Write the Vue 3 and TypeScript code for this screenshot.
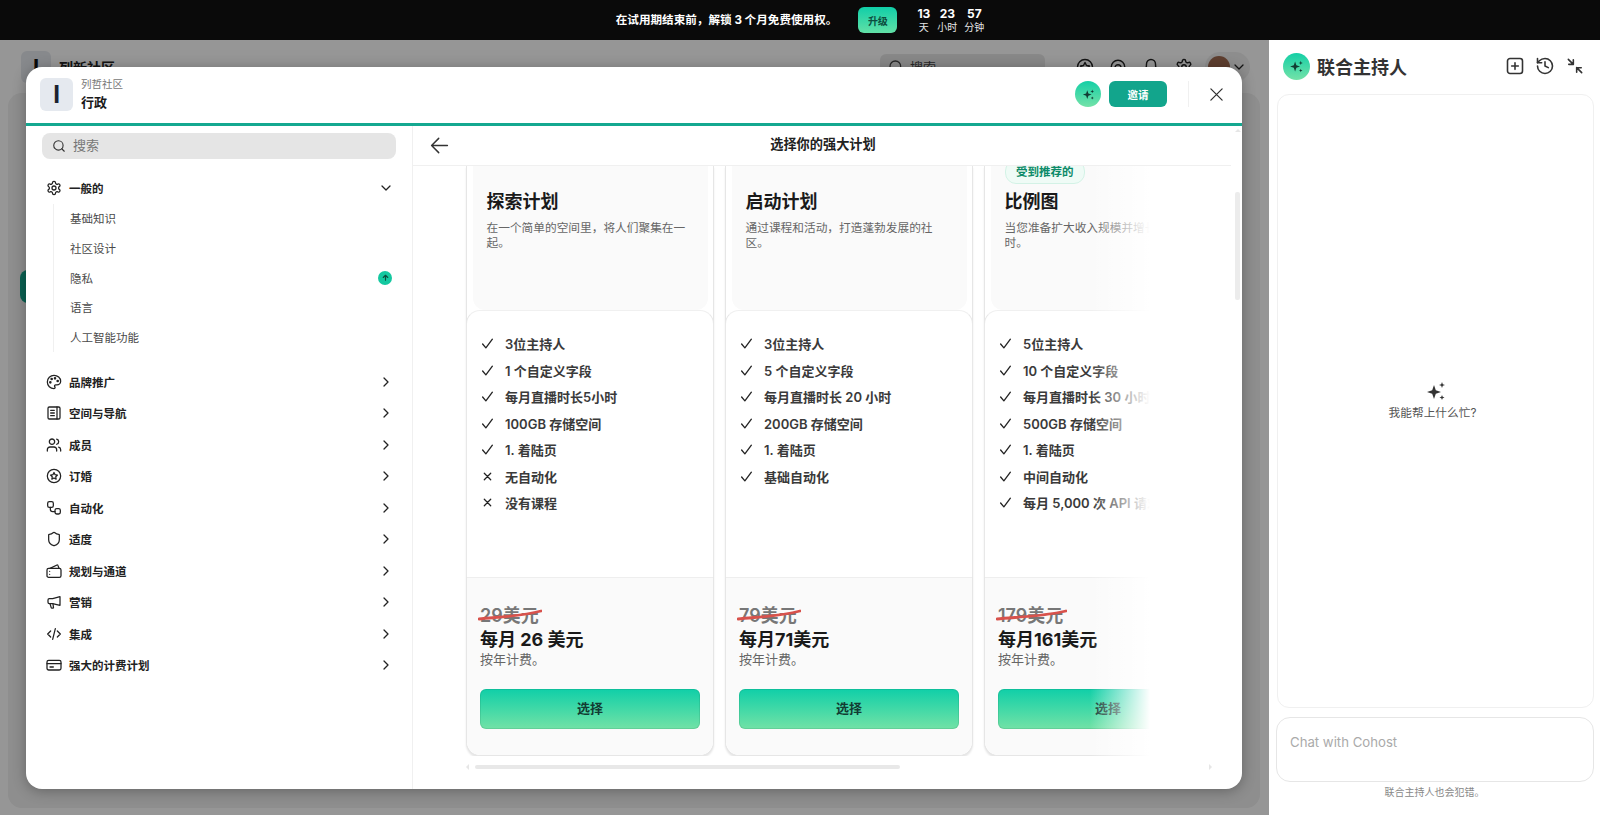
<script setup lang="ts">
interface Feature { text: string; ok: boolean }
interface Plan {
  name: string; desc: string; old: string; price: string; strike: number;
  badge?: string; features: Feature[]
}
const yes = (text: string): Feature => ({ text, ok: true })
const no = (text: string): Feature => ({ text, ok: false })

const plans: Plan[] = [
  {
    name: '探索计划', desc: '在一个简单的空间里，将人们聚集在一起。', old: '29美元', price: '每月 26 美元', strike: 64,
    features: [yes('3位主持人'), yes('1 个自定义字段'), yes('每月直播时长5小时'), yes('100GB 存储空间'), yes('1. 着陆页'), no('无自动化'), no('没有课程')]
  },
  {
    name: '启动计划', desc: '通过课程和活动，打造蓬勃发展的社区。', old: '79美元', price: '每月71美元', strike: 64,
    features: [yes('3位主持人'), yes('5 个自定义字段'), yes('每月直播时长 20 小时'), yes('200GB 存储空间'), yes('1. 着陆页'), yes('基础自动化')]
  },
  {
    name: '比例图', desc: '当您准备扩大收入规模并增长用户群时。', old: '179美元', price: '每月161美元', strike: 71, badge: '受到推荐的',
    features: [yes('5位主持人'), yes('10 个自定义字段'), yes('每月直播时长 30 小时'), yes('500GB 存储空间'), yes('1. 着陆页'), yes('中间自动化'), yes('每月 5,000 次 API 请求')]
  }
]

const subItems = ['基础知识', '社区设计', '隐私', '语言', '人工智能功能']

const gear = 'M12.22 2h-.44a2 2 0 0 0-2 2v.18a2 2 0 0 1-1 1.73l-.43.25a2 2 0 0 1-2 0l-.15-.08a2 2 0 0 0-2.73.73l-.22.38a2 2 0 0 0 .73 2.73l.15.1a2 2 0 0 1 1 1.72v.51a2 2 0 0 1-1 1.74l-.15.09a2 2 0 0 0-.73 2.73l.22.38a2 2 0 0 0 2.73.73l.15-.08a2 2 0 0 1 2 0l.43.25a2 2 0 0 1 1 1.73V20a2 2 0 0 0 2 2h.44a2 2 0 0 0 2-2v-.18a2 2 0 0 1 1-1.73l.43-.25a2 2 0 0 1 2 0l.15.08a2 2 0 0 0 2.73-.73l.22-.39a2 2 0 0 0-.73-2.73l-.15-.08a2 2 0 0 1-1-1.74v-.5a2 2 0 0 1 1-1.74l.15-.09a2 2 0 0 0 .73-2.73l-.22-.38a2 2 0 0 0-2.73-.73l-.15.08a2 2 0 0 1-2 0l-.43-.25a2 2 0 0 1-1-1.73V4a2 2 0 0 0-2-2z'

const navItems = [
  { label: '品牌推广', icon: '<circle cx="13.5" cy="6.5" r="1" fill="currentColor"/><circle cx="17.5" cy="10.5" r="1" fill="currentColor"/><circle cx="8.5" cy="7.5" r="1" fill="currentColor"/><circle cx="6.5" cy="12.5" r="1" fill="currentColor"/><path d="M12 2C6.5 2 2 6.5 2 12s4.5 10 10 10c.926 0 1.648-.746 1.648-1.688 0-.437-.18-.835-.437-1.125-.29-.289-.438-.652-.438-1.125a1.64 1.64 0 0 1 1.668-1.668h1.996c3.051 0 5.555-2.503 5.555-5.554C21.965 6.012 17.461 2 12 2z"/>' },
  { label: '空间与导航', icon: '<rect x="3" y="3" width="18" height="18" rx="2"/><path d="M16.5 3v18M7 8h5.5M7 12h5.5M7 16h5.5"/>' },
  { label: '成员', icon: '<path d="M16 21v-2a4 4 0 0 0-4-4H6a4 4 0 0 0-4 4v2"/><circle cx="9" cy="7" r="4"/><path d="M22 21v-2a4 4 0 0 0-3-3.87"/><path d="M16 3.13a4 4 0 0 1 0 7.75"/>' },
  { label: '订婚', icon: '<circle cx="12" cy="12" r="10"/><path d="M12 6.8l1.6 3.3 3.6.5-2.6 2.5.6 3.6-3.2-1.7-3.2 1.7.6-3.6-2.6-2.5 3.6-.5z"/>' },
  { label: '自动化', icon: '<rect x="2.5" y="2.5" width="8.5" height="8.5" rx="2.5"/><rect x="13.5" y="13" width="8" height="8" rx="2.5"/><path d="M6.5 11v3a3.5 3.5 0 0 0 3.5 3.5h3.5"/>' },
  { label: '适度', icon: '<path d="M20 13c0 5-3.5 7.5-7.66 8.95a1 1 0 0 1-.67-.01C7.5 20.5 4 18 4 13V6a1 1 0 0 1 1-1c2 0 4.5-1.2 6.24-2.72a1.17 1.17 0 0 1 1.52 0C14.51 3.81 17 5 19 5a1 1 0 0 1 1 1z"/>' },
  { label: '规划与通道', icon: '<rect x="1.5" y="8" width="21" height="13.5" rx="2.5"/><path d="M6 8l10.5-5a1 1 0 0 1 1.4.6L19.5 8"/><path d="M5.5 12.5h.01M5.5 17h.01"/>' },
  { label: '营销', icon: '<path d="M21 4v13L10 14.5H5a2 2 0 0 1-2-2V9a2 2 0 0 1 2-2h5z"/><path d="M6 14.5l1.8 6a1 1 0 0 0 1 .7h1.4a1 1 0 0 0 1-1.3L10.5 15"/>' },
  { label: '集成', icon: '<path d="M7 7.5L2.5 12 7 16.5M17 7.5l4.5 4.5-4.5 4.5M14 4l-4 16"/>' },
  { label: '强大的计费计划', icon: '<rect x="1.5" y="5" width="21" height="14.5" rx="2.5"/><path d="M1.5 10h21M6 15h5"/>' }
]
</script>

<template>
  <div class="page">
    <header class="promo">
      <span class="promo-text">在试用期结束前，解锁 3 个月免费使用权。</span>
      <button class="promo-btn" type="button">升级</button>
      <div class="timer">
        <div class="timer-col"><b>13</b><span>天</span></div>
        <div class="timer-col"><b>23</b><span>小时</span></div>
        <div class="timer-col"><b>57</b><span>分钟</span></div>
      </div>
    </header>

    <div class="workspace">
      <div class="under">
        <div class="under-head">
          <div class="under-brand">
            <span class="under-logo">I</span>
            <span class="under-name">列新社区</span>
          </div>
          <div class="under-tools">
            <div class="under-search">
              <svg class="ico-16" viewBox="0 0 24 24"><circle cx="11" cy="11" r="8"/><path d="M21 21l-4.3-4.3"/></svg>
              <span>搜索</span>
            </div>
            <div class="under-icons">
              <svg class="ico-18" viewBox="0 0 24 24"><circle cx="12" cy="12" r="10"/><path d="M12 6l2 4 4 .6-3 3 .8 4-3.8-2-3.8 2 .8-4-3-3 4-.6z"/></svg>
              <svg class="ico-18" viewBox="0 0 24 24"><path d="M3 12a9 9 0 1 1 9 9"/><path d="M8 13a4 4 0 1 1 4 4"/></svg>
              <svg class="ico-18" viewBox="0 0 24 24"><path d="M6 8a6 6 0 0 1 12 0c0 7 3 9 3 9H3s3-2 3-9"/></svg>
              <svg class="ico-18" viewBox="0 0 24 24"><path :d="gear"/><circle cx="12" cy="12" r="3"/></svg>
            </div>
            <div class="under-user">
              <span class="under-avatar"></span>
              <svg class="ico-16" viewBox="0 0 24 24"><path d="M6 9l6 6 6-6"/></svg>
            </div>
          </div>
        </div>
        <div class="under-panel">
          <span class="under-pill"></span>
        </div>
        <div class="scrim"></div>
      </div>

      <aside class="cohost">
        <div class="cohost-head">
          <span class="ai-dot ai-dot-lg">
            <svg viewBox="0 0 24 24"><path d="M10 5l1.8 5.2L17 12l-5.2 1.8L10 19l-1.8-5.2L3 12l5.2-1.8zM18 4l.8 2.2L21 7l-2.2.8L18 10l-.8-2.2L15 7l2.2-.8zM18 15l.7 1.8 1.8.7-1.8.7L18 20l-.7-1.8-1.8-.7 1.8-.7z"/></svg>
          </span>
          <h2 class="cohost-title">联合主持人</h2>
          <div class="cohost-actions">
            <svg class="ico-20" viewBox="0 0 24 24"><rect x="3" y="3" width="18" height="18" rx="3"/><path d="M12 8v8M8 12h8"/></svg>
            <svg class="ico-20" viewBox="0 0 24 24"><path d="M3 12a9 9 0 1 0 9-9 9.75 9.75 0 0 0-6.74 2.74L3 8"/><path d="M3 3v5h5"/><path d="M12 7v5l4 2"/></svg>
            <svg class="ico-20" viewBox="0 0 24 24"><path d="M4 4l6 6M10 4.5V10H4.5M20 20l-6-6M14 19.5V14h5.5"/></svg>
          </div>
        </div>
        <div class="chat">
          <svg class="chat-spark" viewBox="0 0 24 24"><path d="M10 5l1.8 5.2L17 12l-5.2 1.8L10 19l-1.8-5.2L3 12l5.2-1.8zM18 2l.8 2.2L21 5l-2.2.8L18 8l-.8-2.2L15 5l2.2-.8zM18 15l.7 1.8 1.8.7-1.8.7L18 20l-.7-1.8-1.8-.7 1.8-.7z"/></svg>
          <p class="chat-hint">我能帮上什么忙?</p>
        </div>
        <div class="chat-input">Chat with Cohost</div>
        <p class="chat-note">联合主持人也会犯错。</p>
      </aside>
    </div>

    <section class="modal">
      <header class="modal-head">
        <span class="modal-logo">I</span>
        <div class="modal-titles">
          <span class="modal-sup">列哲社区</span>
          <strong class="modal-name">行政</strong>
        </div>
        <div class="modal-actions">
          <span class="ai-dot">
            <svg viewBox="0 0 24 24"><path d="M10 5l1.8 5.2L17 12l-5.2 1.8L10 19l-1.8-5.2L3 12l5.2-1.8zM18 4l.8 2.2L21 7l-2.2.8L18 10l-.8-2.2L15 7l2.2-.8zM18 15l.7 1.8 1.8.7-1.8.7L18 20l-.7-1.8-1.8-.7 1.8-.7z"/></svg>
          </span>
          <button class="invite" type="button">邀请</button>
          <span class="divider"></span>
          <svg class="close" viewBox="0 0 24 24"><path d="M3 3l18 18M21 3L3 21"/></svg>
        </div>
      </header>

      <div class="modal-body">
        <nav class="side">
          <div class="side-search">
            <svg class="ico-16" viewBox="0 0 24 24"><circle cx="11" cy="11" r="8"/><path d="M21 21l-4.3-4.3"/></svg>
            <span>搜索</span>
          </div>
          <div class="nav-row nav-first">
            <svg class="ico-16" viewBox="0 0 24 24"><path :d="gear"/><circle cx="12" cy="12" r="3"/></svg>
            <span class="nav-label">一般的</span>
            <svg class="ico-16 chev" viewBox="0 0 24 24"><path d="M6 9l6 6 6-6"/></svg>
          </div>
          <ul class="sub">
            <li v-for="s in subItems" :key="s" class="sub-item">
              <span>{{ s }}</span>
              <span v-if="s === '隐私'" class="up-badge">
                <svg viewBox="0 0 24 24"><path d="M12 19V6M6 12l6-6 6 6"/></svg>
              </span>
            </li>
          </ul>
          <div class="nav-list">
            <div v-for="item in navItems" :key="item.label" class="nav-row">
              <svg class="ico-16" viewBox="0 0 24 24" v-html="item.icon"></svg>
              <span class="nav-label">{{ item.label }}</span>
              <svg class="ico-16 chev" viewBox="0 0 24 24"><path d="M9 6l6 6-6 6"/></svg>
            </div>
          </div>
        </nav>

        <div class="main">
          <div class="main-head">
            <svg class="back" viewBox="0 0 24 24"><path d="M22 12H2M11 3l-9 9 9 9"/></svg>
            <h1 class="main-title">选择你的强大计划</h1>
          </div>
          <div class="plans">
            <article v-for="p in plans" :key="p.name" class="card">
              <span v-if="p.badge" class="rec">{{ p.badge }}</span>
              <div class="card-top">
                <h3 class="card-name">{{ p.name }}</h3>
                <p class="card-desc">{{ p.desc }}</p>
              </div>
              <ul class="features">
                <li v-for="f in p.features" :key="f.text" class="feature">
                  <svg v-if="f.ok" class="mark" viewBox="0 0 24 24"><path d="M3 13l6 7L21 4"/></svg>
                  <svg v-else class="mark mark-x" viewBox="0 0 24 24"><path d="M5 5l14 14M19 5L5 19"/></svg>
                  <span>{{ f.text }}</span>
                </li>
              </ul>
              <div class="card-foot">
                <div class="old">
                  <span>{{ p.old }}</span>
                  <svg class="strike" :style="{ width: p.strike + 'px' }" viewBox="0 0 64 12" preserveAspectRatio="none"><path d="M1 10C16 8 40 8 63 2"/></svg>
                </div>
                <div class="price">{{ p.price }}</div>
                <div class="bill">按年计费。</div>
                <button class="pick" type="button">选择</button>
              </div>
            </article>
            <div class="fade"></div>
          </div>
          <div class="hbar">
            <i class="tri tri-l"></i>
            <span class="hthumb"></span>
            <i class="tri tri-r"></i>
          </div>
          <span class="vthumb"></span>
          <i class="tri tri-u"></i>
        </div>
      </div>
    </section>
  </div>
</template>

<style>
html, body { margin: 0; height: 815px; overflow: hidden; background: #fff; }
</style>

<style scoped>
.page {
  position: relative;
  width: 1600px;
  height: 815px;
  overflow: hidden;
  display: flex;
  flex-direction: column;
  font-family: Inter, "Noto Sans CJK SC", sans-serif;
  color: #222;
}
h1, h2, h3, p, ul { margin: 0; padding: 0; list-style: none; }
button { font-family: inherit; border: 0; cursor: pointer; }
svg { flex: none; fill: none; stroke: currentColor; stroke-width: 1.9; stroke-linecap: round; stroke-linejoin: round; }
.ico-16 { width: 16px; height: 16px; }
.ico-18 { width: 18px; height: 18px; }
.ico-20 { width: 20px; height: 20px; }

/* promo bar */
.promo {
  height: 40px;
  flex: none;
  background: #0a0a0a;
  display: flex;
  align-items: center;
  justify-content: center;
  color: #fff;
}
.promo-text { font-size: 11.6px; font-weight: 700; line-height: 16px; }
.promo-btn {
  margin-left: 21px;
  width: 39px;
  height: 26px;
  border-radius: 6px;
  background: linear-gradient(180deg, #10cea8, #62e0a6);
  color: #0c4d3e;
  font-size: 10px;
  font-weight: 700;
  padding: 0;
}
.timer { margin-left: 20px; display: flex; gap: 7px; }
.timer-col { display: flex; flex-direction: column; align-items: center; }
.timer-col b { font-size: 12px; line-height: 14px; font-weight: 700; }
.timer-col span { font-size: 10px; line-height: 13px; color: #e6e6e6; }

/* page behind the dialog */
.workspace { flex: 1; display: flex; min-height: 0; }
.under {
  position: relative;
  width: 1269px;
  flex: none;
  display: flex;
  flex-direction: column;
  background: #fff;
}
.under-head {
  height: 53px;
  flex: none;
  display: flex;
  align-items: center;
  justify-content: space-between;
  padding: 0 19px 0 21px;
}
.under-brand { display: flex; align-items: center; gap: 8px; }
.under-logo {
  width: 30px; height: 32px; border-radius: 6px; background: #e5e9ef;
  display: flex; align-items: center; justify-content: center;
  font-size: 22px; font-weight: 700; color: #111;
}
.under-name { font-size: 14px; font-weight: 700; }
.under-tools { display: flex; align-items: center; }
.under-search {
  width: 165px; height: 26px; box-sizing: border-box; border-radius: 6px; background: #e8e8e8;
  display: flex; align-items: center; gap: 6px; padding-left: 8px; font-size: 13px; color: #444;
}
.under-icons { margin-left: 31px; display: flex; gap: 15px; }
.under-user {
  margin-left: 12px; width: 45px; height: 30px; border-radius: 15px; background: #f0f0f0;
  display: flex; align-items: center; justify-content: center; gap: 1px;
}
.under-avatar { width: 22px; height: 22px; border-radius: 50%; background: #a06a50; }
.under-panel {
  flex: 1;
  margin: 0 9px 7px 8px;
  border-radius: 14px;
  background: #f1f1f1;
  padding: 177px 0 0 12px;
}
.under-pill { display: block; width: 40px; height: 33px; border-radius: 8px; background: #12a58c; }
.scrim { position: absolute; inset: 0; background: rgba(0, 0, 0, 0.41); }

/* cohost panel */
.cohost { flex: 1; display: flex; flex-direction: column; background: #fff; min-width: 0; }
.cohost-head {
  height: 54px; flex: none; display: flex; align-items: center;
  padding: 0 15px 2px 14px; box-sizing: border-box;
}
.ai-dot {
  width: 26px; height: 26px; border-radius: 50%; flex: none;
  background: linear-gradient(180deg, #14cfa6, #74e2a8);
  display: flex; align-items: center; justify-content: center; color: #123c33;
}
.ai-dot svg { width: 15px; height: 15px; fill: currentColor; stroke: none; }
.ai-dot-lg { width: 27px; height: 27px; }
.ai-dot-lg svg { width: 17px; height: 17px; }
.cohost-title { margin-left: 7px; font-size: 18px; font-weight: 600; color: #333; }
.cohost-actions { margin-left: auto; display: flex; gap: 10px; color: #333; }
.chat {
  flex: 1; margin: 0 6px 0 8px; border: 1px solid #f0f0f0; border-radius: 12px;
  display: flex; flex-direction: column; align-items: center; justify-content: center;
}
.chat-spark { width: 24px; height: 24px; margin: -1px 0 -1px; fill: #333; stroke: none; }
.chat-hint { margin: 2px 6px 0 0; font-size: 11.7px; line-height: 17px; color: #555; }
.chat-input {
  flex: none; height: 65px; box-sizing: border-box; margin: 9px 6px 0 7px;
  border: 1px solid #e6e6e6; border-radius: 14px; padding: 14px 13px 0;
  font-size: 13.2px; line-height: 20px; color: #aaa;
}
.chat-note {
  flex: none; height: 33px; box-sizing: border-box; padding-top: 3px;
  text-align: center; font-size: 10px; line-height: 14px; color: #888;
}

/* dialog */
.modal {
  position: absolute;
  left: 26px;
  top: 67px;
  width: 1216px;
  height: 722px;
  background: #fff;
  border-radius: 16px;
  overflow: hidden;
  display: flex;
  flex-direction: column;
  box-shadow: 0 2px 14px rgba(0, 0, 0, 0.3);
}
.modal-head {
  flex: none; height: 56px; box-sizing: content-box; display: flex; align-items: center;
  padding: 0 18px 0 14px; border-bottom: 3px solid #14a890;
}
.modal-logo {
  width: 33px; height: 33px; margin-top: -2px; border-radius: 6px; background: #e5e9ef;
  display: flex; align-items: center; justify-content: center;
  font-size: 24px; font-weight: 700; color: #1a2230;
}
.modal-titles { margin: -2px 0 0 8px; display: flex; flex-direction: column; }
.modal-sup { font-size: 10.5px; line-height: 15px; color: #777; }
.modal-name { font-size: 13px; line-height: 19px; font-weight: 700; color: #1a1a1a; margin-top: 1px; }
.modal-actions { margin: -2px 0 0 auto; display: flex; align-items: center; }
.invite {
  margin-left: 8px; width: 58px; height: 26px; border-radius: 6px; background: #12a58c;
  color: #fff; font-size: 10.5px; font-weight: 700; padding: 0;
}
.divider { width: 1px; height: 26px; background: #f0f0f0; margin: 0 20px 0 21px; }
.close { width: 15px; height: 15px; stroke-width: 2; color: #333; }
.modal-body { flex: 1; display: flex; min-height: 0; }

/* settings side nav */
.side {
  width: 387px; flex: none; box-sizing: border-box; border-right: 1px solid #f0f0f0;
  padding: 7px 16px 0;
}
.side-search {
  height: 26px; border-radius: 8px; background: #e5e5e5; color: #333;
  display: flex; align-items: center; gap: 7px; padding-left: 10px;
}
.side-search .ico-16 { width: 14px; height: 14px; }
.side-search span { font-size: 13px; line-height: 18px; color: #777; margin-top: -2px; }
.nav-row {
  height: 31.5px; display: flex; align-items: center; padding: 0 2px 0 4px;
  color: #222;
}
.nav-row .ico-16 { stroke-width: 1.9; }
.nav-label { margin-left: 7px; font-size: 11.5px; font-weight: 600; color: #222; }
.chev { margin-left: auto; stroke-width: 2.3; }
.nav-first { margin-top: 13px; }
.sub { margin-left: 11px; border-left: 1px solid #f0f0f0; padding-left: 16px; }
.sub-item {
  height: 29.7px; display: flex; align-items: center; justify-content: space-between;
  font-size: 11.5px; color: #4a4a4a; padding-right: 4px;
}
.up-badge {
  width: 14px; height: 14px; border-radius: 50%; background: #14c8a0; color: #0c4d3e;
  display: flex; align-items: center; justify-content: center;
}
.up-badge svg { width: 9px; height: 9px; stroke-width: 3; }
.nav-list { margin-top: 14px; }

/* plans */
.main { position: relative; flex: 1; min-width: 0; display: flex; flex-direction: column; }
.main-head {
  position: relative; flex: none; height: 39px; margin-right: 11px; border-bottom: 1px solid #f0f0f0;
  display: flex; align-items: center; justify-content: center;
}
.back { position: absolute; left: 17px; top: 10px; width: 19px; height: 19px; stroke-width: 1.8; color: #333; }
.main-title { font-size: 13.2px; line-height: 18px; margin: -3px 0 0 2px; font-weight: 600; color: #222; }
.plans {
  position: relative; flex: none; height: 590px; overflow: hidden;
  display: flex; gap: 11px; padding-left: 53px;
}
.card {
  position: relative; flex: none; width: 248px; height: 590px; box-sizing: border-box;
  border: 1.5px solid #e6e6e6; border-top: 0; border-radius: 0 0 14px 14px; background: #fff;
  box-shadow: 0 2px 2px rgba(0, 0, 0, 0.1);
  display: flex; flex-direction: column; overflow: visible;
}
.rec {
  position: absolute; left: 20px; top: -6px; height: 22px; padding: 0 10px;
  border: 1px solid #d3f2e6; border-radius: 11px; background: #effbf6;
  color: #0b8a68; font-size: 11.5px; font-weight: 700; line-height: 22px; z-index: 1;
}
.card-top {
  flex: none; height: 144px; margin: 0 5.5px; box-sizing: border-box; padding: 23px 8px 0 14px;
  background: #fafafa; border-radius: 0 0 12px 12px;
}
.card-name { font-size: 18px; line-height: 26px; font-weight: 700; color: #1a1a1a; }
.card-desc { margin-top: 6px; width: 204px; font-size: 11.7px; line-height: 14.5px; color: #666; }
.features {
  flex: none; height: 267px; box-sizing: border-box; padding: 19.5px 0 0 14px;
  border-top: 1px solid #f0f0f0; border-radius: 14px 14px 0 0;
  margin: 0 -1px; border-left: 1px solid #e8e8e8; border-right: 1px solid #e8e8e8;
}
.feature { height: 26px; margin-bottom: .5px; display: flex; align-items: center; font-size: 13px; font-weight: 600; color: #3a3a3a; }
.mark { width: 13px; height: 13px; stroke-width: 2.4; color: #222; margin-right: 11px; }
.mark-x { width: 11px; height: 11px; stroke-width: 2.8; margin: 0 12px 0 1px; }
.card-foot {
  flex: 1; background: #fafafa; border-top: 1px solid #eee; border-radius: 0 0 14px 14px;
  padding: 26px 13px 0;
}
.old { position: relative; width: max-content; font-size: 18px; line-height: 23px; font-weight: 600; color: #777; }
.strike {
  position: absolute; left: -2px; top: 5px; height: 12px;
  color: #d8524c; stroke-width: 2.8;
}
.price { margin-top: 1px; font-size: 18px; line-height: 24px; font-weight: 700; color: #1a1a1a; }
.bill { font-size: 13px; line-height: 18px; color: #666; margin-top: -2px; }
.pick {
  display: block; width: 100%; height: 40px; margin-top: 21px; padding: 0 0 3px; border-radius: 6px;
  background: linear-gradient(180deg, #10cfa8, #72e2a6);
  box-shadow: inset 0 0 0 1px rgba(0, 80, 60, 0.12);
  color: #123c33; font-size: 13px; font-weight: 600;
}
.fade {
  position: absolute; left: 677px; right: 0; top: 0; bottom: 0;
  background: linear-gradient(90deg, rgba(255, 255, 255, 0), #fff 60px);
  z-index: 2;
}
.hbar { position: relative; margin: 9px 28px 0 53px; height: 4px; }
.hthumb { position: absolute; left: 9px; width: 425px; top: 0; height: 4px; border-radius: 2px; background: #e8e8e8; }
.vthumb { position: absolute; left: 822px; top: 66px; width: 5px; height: 108px; border-radius: 2px; background: #ececec; z-index: 3; }
.tri { position: absolute; width: 0; height: 0; border: 3px solid transparent; }
.tri-l { left: 0; top: -1px; border-right-color: #e6e6e6; border-left-width: 0; }
.tri-r { right: 2px; top: -1px; border-left-color: #e6e6e6; border-right-width: 0; }
.tri-u { left: 822px; top: 3px; border-bottom-color: #e6e6e6; border-top-width: 0; }
</style>
